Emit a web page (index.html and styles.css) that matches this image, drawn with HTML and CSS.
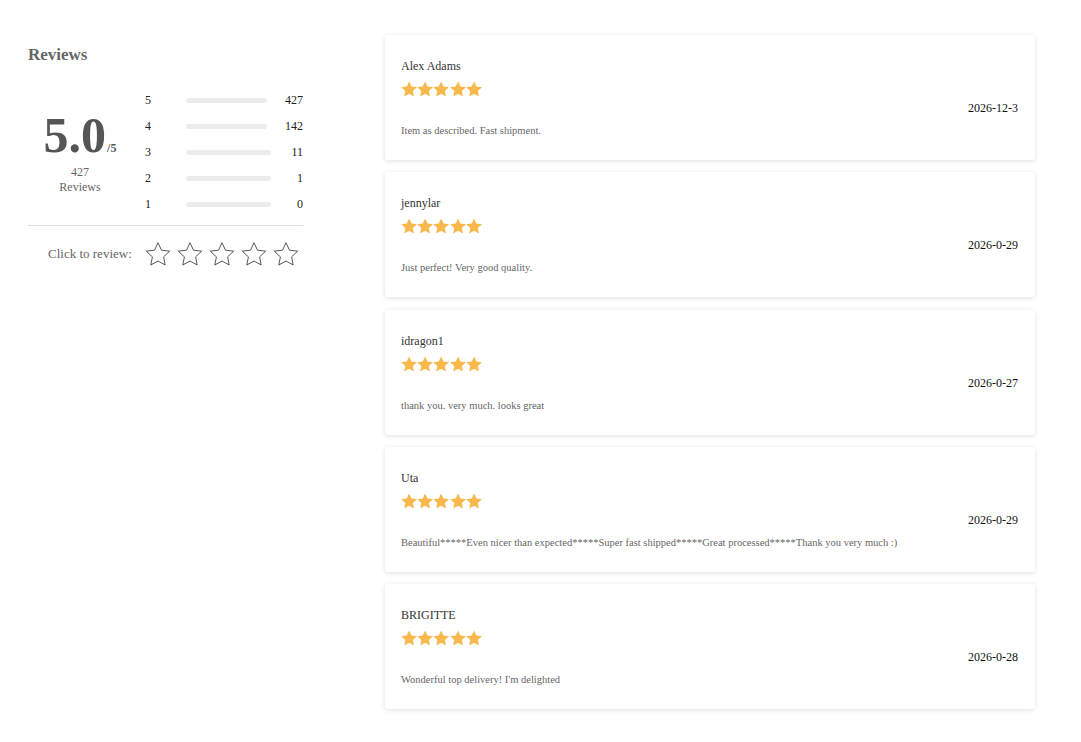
FILE: index.html
```html
<!DOCTYPE html>
<html>
<head>
<meta charset="utf-8">
<link rel="stylesheet" href="styles.css">
</head>
<body>
<svg width="0" height="0" class="defs">
  <defs>
    <path id="star" d="M12 0.7L15.5 8.2L23.7 9.2L17.6 14.8L19.2 23L12 19L4.8 23L6.4 14.8L0.3 9.2L8.5 8.2Z"/>
  </defs>
</svg>
<div class="page">
  <aside class="summary">
    <h2 class="title">Reviews</h2>
    <div class="stats">
      <div class="score">
        <div class="score-big"><span class="score-num">5.0</span><span class="score-max">/5</span></div>
        <div class="score-count">427</div>
        <div class="score-label">Reviews</div>
      </div>
      <div class="dist">
        <div class="dist-row"><span class="dist-label">5</span><span class="bar"></span><span class="dist-count">427</span></div>
        <div class="dist-row"><span class="dist-label">4</span><span class="bar"></span><span class="dist-count">142</span></div>
        <div class="dist-row"><span class="dist-label">3</span><span class="bar"></span><span class="dist-count">11</span></div>
        <div class="dist-row"><span class="dist-label">2</span><span class="bar"></span><span class="dist-count">1</span></div>
        <div class="dist-row"><span class="dist-label">1</span><span class="bar"></span><span class="dist-count">0</span></div>
      </div>
    </div>
    <div class="click-review">
      <span class="click-text">Click to review:</span>
      <div class="outline-stars">
        <svg viewBox="0 0 24 24"><use href="#star"/></svg>
        <svg viewBox="0 0 24 24"><use href="#star"/></svg>
        <svg viewBox="0 0 24 24"><use href="#star"/></svg>
        <svg viewBox="0 0 24 24"><use href="#star"/></svg>
        <svg viewBox="0 0 24 24"><use href="#star"/></svg>
      </div>
    </div>
  </aside>
  <main class="list">
    <div class="card">
      <div class="name">Alex Adams</div>
      <div class="stars"><svg viewBox="0 0 24 24"><use href="#star"/></svg><svg viewBox="0 0 24 24"><use href="#star"/></svg><svg viewBox="0 0 24 24"><use href="#star"/></svg><svg viewBox="0 0 24 24"><use href="#star"/></svg><svg viewBox="0 0 24 24"><use href="#star"/></svg></div>
      <div class="date">2026-12-3</div>
      <div class="comment">Item as described. Fast shipment.</div>
    </div>
    <div class="card">
      <div class="name">jennylar</div>
      <div class="stars"><svg viewBox="0 0 24 24"><use href="#star"/></svg><svg viewBox="0 0 24 24"><use href="#star"/></svg><svg viewBox="0 0 24 24"><use href="#star"/></svg><svg viewBox="0 0 24 24"><use href="#star"/></svg><svg viewBox="0 0 24 24"><use href="#star"/></svg></div>
      <div class="date">2026-0-29</div>
      <div class="comment">Just perfect! Very good quality.</div>
    </div>
    <div class="card">
      <div class="name">idragon1</div>
      <div class="stars"><svg viewBox="0 0 24 24"><use href="#star"/></svg><svg viewBox="0 0 24 24"><use href="#star"/></svg><svg viewBox="0 0 24 24"><use href="#star"/></svg><svg viewBox="0 0 24 24"><use href="#star"/></svg><svg viewBox="0 0 24 24"><use href="#star"/></svg></div>
      <div class="date">2026-0-27</div>
      <div class="comment">thank you. very much. looks great</div>
    </div>
    <div class="card">
      <div class="name">Uta</div>
      <div class="stars"><svg viewBox="0 0 24 24"><use href="#star"/></svg><svg viewBox="0 0 24 24"><use href="#star"/></svg><svg viewBox="0 0 24 24"><use href="#star"/></svg><svg viewBox="0 0 24 24"><use href="#star"/></svg><svg viewBox="0 0 24 24"><use href="#star"/></svg></div>
      <div class="date">2026-0-29</div>
      <div class="comment">Beautiful*****Even nicer than expected*****Super fast shipped*****Great processed*****Thank you very much :)</div>
    </div>
    <div class="card">
      <div class="name">BRIGITTE</div>
      <div class="stars"><svg viewBox="0 0 24 24"><use href="#star"/></svg><svg viewBox="0 0 24 24"><use href="#star"/></svg><svg viewBox="0 0 24 24"><use href="#star"/></svg><svg viewBox="0 0 24 24"><use href="#star"/></svg><svg viewBox="0 0 24 24"><use href="#star"/></svg></div>
      <div class="date">2026-0-28</div>
      <div class="comment">Wonderful top delivery! I'm delighted</div>
    </div>
  </main>
</div>
</body>
</html>
```

FILE: styles.css
```css
* { box-sizing: border-box; }
html, body { margin: 0; padding: 0; background: #fff; }
body { font-family: "Liberation Serif", "Times New Roman", serif; color: #333; }
.defs { position: absolute; width: 0; height: 0; overflow: hidden; }

.page {
  display: flex;
  align-items: flex-start;
  padding: 35px 0 30px 28px;
}

.summary { width: 275px; flex: none; padding-top: 10px; }
.title {
  margin: 0;
  font-size: 17px;
  line-height: 20px;
  font-weight: bold;
  color: #666;
}

.stats { display: flex; margin-top: 22px; }
.score {
  width: 104px;
  flex: none;
  text-align: center;
  padding-top: 26px;
  color: #666;
}
.score-big { line-height: 44px; height: 44px; color: #555; font-weight: bold; }
.score-num { font-size: 50px; }
.score-max { font-size: 12px; margin-left: 1px; }
.score-count, .score-label { font-size: 12px; line-height: 15px; }
.score-count { margin-top: 8px; }

.dist { flex: 1; margin-left: 13px; }
.dist-row {
  display: flex;
  align-items: center;
  height: 26px;
  font-size: 12px;
  color: #222;
}
.dist-label { width: 41px; flex: none; }
.bar { flex: 1; height: 5px; border-radius: 3px; background: #ececec; }
.dist-count { min-width: 32px; padding-left: 18px; text-align: right; }

.click-review {
  display: flex;
  align-items: center;
  margin-top: 8px;
  border-top: 1px solid #ddd;
  padding: 16px 0 0 20px;
}
.click-text { font-size: 13px; color: #666; margin-right: 14px; }
.outline-stars { display: flex; gap: 8px; }
.outline-stars svg {
  width: 24px; height: 24px; overflow: visible;
  fill: none; stroke: #444; stroke-width: 0.9; stroke-linejoin: round;
}

.list {
  width: 650px;
  margin-left: 82px;
  display: flex;
  flex-direction: column;
  gap: 12.3px;
}
.card {
  background: #fff;
  border-radius: 3px;
  box-shadow: 0 1px 5px rgba(0, 0, 0, 0.13);
  padding: 22px 17px 20px 16px;
  height: 125px;
}
.name { font-size: 12px; line-height: 18px; color: #333; }
.stars { display: flex; margin-top: 6px; height: 16px; }
.stars svg { width: 16.2px; height: 16.2px; fill: #f8b84c; }
.date { font-size: 12px; line-height: 18px; text-align: right; color: #111; margin-top: 2px; }
.comment { font-size: 10.5px; line-height: 16px; color: #666; margin-top: 6px; }
```
